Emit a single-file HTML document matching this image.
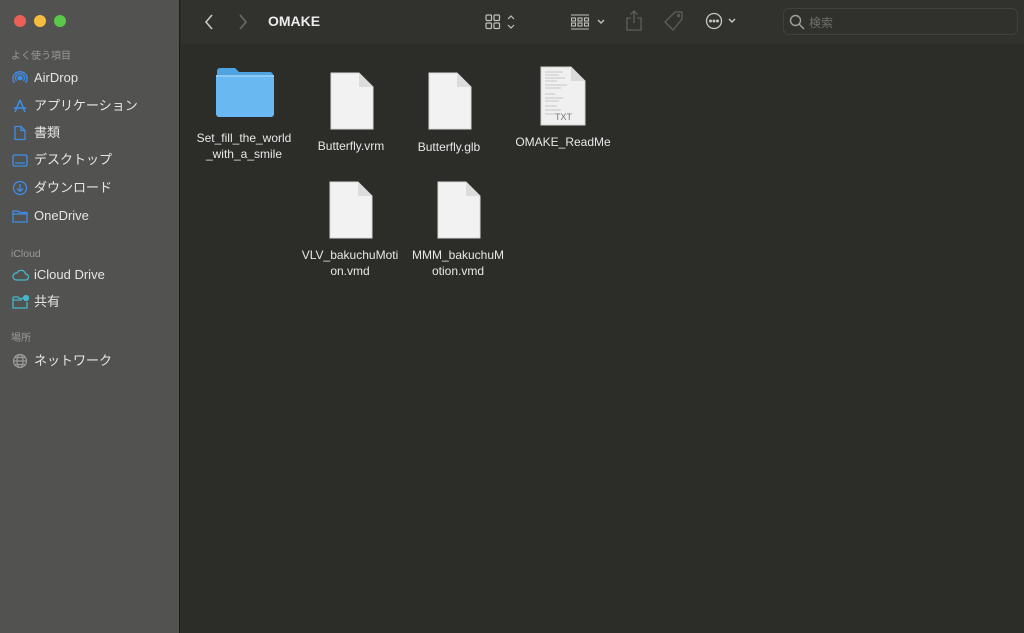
<!DOCTYPE html><html><head><meta charset="utf-8"><style>
*{margin:0;padding:0;box-sizing:border-box}
body{width:1024px;height:633px;overflow:hidden;background:#2c2c29;font-family:"Liberation Sans","Noto Sans CJK JP",sans-serif;position:relative}
#side{position:absolute;left:0;top:0;width:180px;height:633px;background:#525250;border-right:1px solid #1c1c1a}
.dot{position:absolute;top:15px;width:12px;height:12px;border-radius:50%}
.h{position:absolute;left:11px;font-size:10px;color:#9a9a97;line-height:12px}
.it{position:absolute;left:34px;font-size:13px;color:#e6e6e4;line-height:16px;height:16px}
.ic{position:absolute;left:12px}
#tb{position:absolute;left:181px;top:0;right:0;height:44px;background:#31312d}
.lbl{position:absolute;color:#e8e8e6;font-size:12px;text-align:center;line-height:16px;width:116px}
.doc{position:absolute}
</style></head><body>
<div id="side">
<div class="dot" style="left:14px;background:#ec5f58"></div>
<div class="dot" style="left:34px;background:#f4bd3e"></div>
<div class="dot" style="left:54px;background:#5cc84a"></div>
<div class="h" style="top:51px">よく使う項目</div>
<svg class="ic" style="top:70px" width="16" height="16" viewBox="0 0 16 16" fill="none" stroke="#3e8ee8" stroke-width="1.4"><circle cx="8" cy="8" r="1.6" fill="#3e8ee8"/><path d="M4.5 11a4.5 4.5 0 1 1 7 0M2.5 13a7 7 0 1 1 11 0M6.5 9.5a2 2 0 1 1 3 0"/></svg>
<div class="it" style="top:70px">AirDrop</div>
<svg class="ic" style="top:98px" width="16" height="16" viewBox="0 0 16 16" fill="none" stroke="#3e8ee8" stroke-width="1.6"><path d="M8 2L3 14M8 2l5 12M2 10h12"/></svg>
<div class="it" style="top:98px">アプリケーション</div>
<svg class="ic" style="top:125px" width="16" height="16" viewBox="0 0 16 16" fill="none" stroke="#3e8ee8" stroke-width="1.3"><path d="M3 1.5h6l4 4v9H3z M9 1.5v4h4"/></svg>
<div class="it" style="top:125px">書類</div>
<svg class="ic" style="top:152px" width="16" height="16" viewBox="0 0 16 16" fill="none" stroke="#3e8ee8" stroke-width="1.3"><rect x="1" y="3" width="14" height="11" rx="1.5"/><path d="M3 11h10"/></svg>
<div class="it" style="top:152px">デスクトップ</div>
<svg class="ic" style="top:180px" width="16" height="16" viewBox="0 0 16 16" fill="none" stroke="#3e8ee8" stroke-width="1.3"><circle cx="8" cy="8" r="6.5"/><path d="M8 4v7M5 8.5l3 3 3-3"/></svg>
<div class="it" style="top:180px">ダウンロード</div>
<svg class="ic" style="top:208px" width="16" height="16" viewBox="0 0 16 16" fill="none" stroke="#3e8ee8" stroke-width="1.3"><path d="M1 3h5l1.5 1.5H15V14H1z M1 6h14"/></svg>
<div class="it" style="top:208px">OneDrive</div>
<div class="h" style="top:248px;font-size:10.5px">iCloud</div>
<svg class="ic" style="top:267px" width="17" height="16" viewBox="0 0 17 16" fill="none" stroke="#44b8c8" stroke-width="1.3"><path d="M4 13h9.5a3 3 0 0 0 0-6 4.5 4.5 0 0 0-8.5-1A3.5 3.5 0 0 0 4 13z"/></svg>
<div class="it" style="top:267px">iCloud Drive</div>
<svg class="ic" style="top:294px" width="17" height="16" viewBox="0 0 17 16" fill="none" stroke="#44b8c8" stroke-width="1.3"><path d="M1 3h5l1.5 1.5H11 M15 8v6H1V3 M1 6h9"/><circle cx="14" cy="4" r="2.5" fill="#44b8c8"/></svg>
<div class="it" style="top:294px">共有</div>
<div class="h" style="top:333px">場所</div>
<svg class="ic" style="top:353px" width="16" height="16" viewBox="0 0 16 16" fill="none" stroke="#9a9a97" stroke-width="1.2"><circle cx="8" cy="8" r="6.5"/><ellipse cx="8" cy="8" rx="3" ry="6.5"/><path d="M1.5 8h13M2.5 4.5h11M2.5 11.5h11"/></svg>
<div class="it" style="top:353px">ネットワーク</div>
</div>
<div id="tb">
<svg style="position:absolute;left:22px;top:13px" width="12" height="18" viewBox="0 0 12 18" fill="none" stroke="#c8c8c4" stroke-width="1.6"><path d="M9 2L3 9l6 7"/></svg>
<svg style="position:absolute;left:56px;top:13px" width="12" height="18" viewBox="0 0 12 18" fill="none" stroke="#6a6a66" stroke-width="1.6"><path d="M3 2l6 7-6 7"/></svg>
<div style="position:absolute;left:87px;top:13px;color:#ececea;font-size:14px;font-weight:bold">OMAKE</div>
<svg style="position:absolute;left:304px;top:13px" width="36" height="18" viewBox="0 0 36 18" fill="none" stroke="#c0c0bc" stroke-width="1.2"><rect x="1" y="2" width="5.5" height="5.5" rx="1"/><rect x="9" y="2" width="5.5" height="5.5" rx="1"/><rect x="1" y="10" width="5.5" height="5.5" rx="1"/><rect x="9" y="10" width="5.5" height="5.5" rx="1"/><path d="M23 6l3-3 3 3M23 12l3 3 3-3"/></svg>
<svg style="position:absolute;left:390px;top:13px" width="36" height="18" viewBox="0 0 36 18" fill="none" stroke="#c0c0bc" stroke-width="1.1"><path d="M0 2h18M0 16h18"/><rect x="0.5" y="5" width="4" height="3"/><rect x="7" y="5" width="4" height="3"/><rect x="13.5" y="5" width="4" height="3"/><rect x="0.5" y="10" width="4" height="3"/><rect x="7" y="10" width="4" height="3"/><rect x="13.5" y="10" width="4" height="3"/><path d="M27 7l3 3 3-3" stroke-width="1.4"/></svg>
<svg style="position:absolute;left:444px;top:10px" width="18" height="22" viewBox="0 0 18 22" fill="none" stroke="#5e5e5a" stroke-width="1.3"><path d="M9 1v12M5.5 4.5L9 1l3.5 3.5M6 8H2v12h14V8h-4"/></svg>
<svg style="position:absolute;left:482px;top:10px" width="22" height="22" viewBox="0 0 22 22" fill="none" stroke="#5e5e5a" stroke-width="1.3"><path d="M12 2h7v7L10 20 2 12z"/><circle cx="15.5" cy="5.5" r="1"/></svg>
<svg style="position:absolute;left:524px;top:12px" width="36" height="20" viewBox="0 0 36 20" fill="none" stroke="#c8c8c4" stroke-width="1.3"><circle cx="9" cy="9" r="7.5"/><circle cx="5.5" cy="9" r=".8" fill="#c8c8c4"/><circle cx="9" cy="9" r=".8" fill="#c8c8c4"/><circle cx="12.5" cy="9" r=".8" fill="#c8c8c4"/><path d="M24 7l3 3 3-3" stroke-width="1.4"/></svg>
<div style="position:absolute;left:602px;top:8px;width:235px;height:27px;border:1px solid #40403c;border-radius:6px;background:#30302c"></div>
<svg style="position:absolute;left:608px;top:14px" width="16" height="16" viewBox="0 0 16 16" fill="none" stroke="#a0a09c" stroke-width="1.4"><circle cx="6.5" cy="6.5" r="5"/><path d="M10 10l5 5"/></svg>
<div style="position:absolute;left:628px;top:14px;color:#6e6e6a;font-size:12px">検索</div>
</div>
<svg style="position:absolute;left:215px;top:67px" width="60" height="51" viewBox="0 0 60 51"><path d="M2 4a3 3 0 0 1 3-3h15l4 4h31a3 3 0 0 1 3 3v4H2z" fill="#4fa3e0"/><rect x="1" y="8" width="58" height="42" rx="3" fill="#6ab8f2"/><rect x="1" y="8" width="58" height="2" fill="#8ccaf5"/></svg>
<div class="lbl" style="left:186px;top:130px">Set_fill_the_world<br>_with_a_smile</div>
<svg class="doc" style="left:330px;top:72px" width="44" height="58" viewBox="0 0 44 58"><path d="M1 1h28l14 14v42H1z" fill="#f2f2f2" stroke="#d8d8d8"/><path d="M29 1v14h14z" fill="#dcdcdc"/></svg>
<div class="lbl" style="left:293px;top:138px">Butterfly.vrm</div>
<svg class="doc" style="left:428px;top:72px" width="44" height="58" viewBox="0 0 44 58"><path d="M1 1h28l14 14v42H1z" fill="#f2f2f2" stroke="#d8d8d8"/><path d="M29 1v14h14z" fill="#dcdcdc"/></svg>
<div class="lbl" style="left:391px;top:139px">Butterfly.glb</div>
<svg class="doc" style="left:540px;top:66px" width="46" height="60" viewBox="0 0 46 60"><path d="M1 1h30l14 14v44H1z" fill="#f0f0f0" stroke="#d0d0d0"/><path d="M31 1v14h14z" fill="#dadada"/><g stroke="#b8b8b8" stroke-width=".8"><path d="M5 6h18M5 9h14M5 12h20M5 15h12M5 19h22M5 22h16M5 28h10M5 32h18M5 35h14M5 40h12M5 44h16M5 48h10"/></g><text x="15" y="54" font-size="9" fill="#777" font-family="Liberation Sans">TXT</text></svg>
<div class="lbl" style="left:505px;top:134px">OMAKE_ReadMe</div>
<svg class="doc" style="left:329px;top:181px" width="44" height="58" viewBox="0 0 44 58"><path d="M1 1h28l14 14v42H1z" fill="#f2f2f2" stroke="#d8d8d8"/><path d="M29 1v14h14z" fill="#dcdcdc"/></svg>
<div class="lbl" style="left:292px;top:247px">VLV_bakuchuMoti<br>on.vmd</div>
<svg class="doc" style="left:437px;top:181px" width="44" height="58" viewBox="0 0 44 58"><path d="M1 1h28l14 14v42H1z" fill="#f2f2f2" stroke="#d8d8d8"/><path d="M29 1v14h14z" fill="#dcdcdc"/></svg>
<div class="lbl" style="left:400px;top:247px">MMM_bakuchuM<br>otion.vmd</div>
</body></html>
